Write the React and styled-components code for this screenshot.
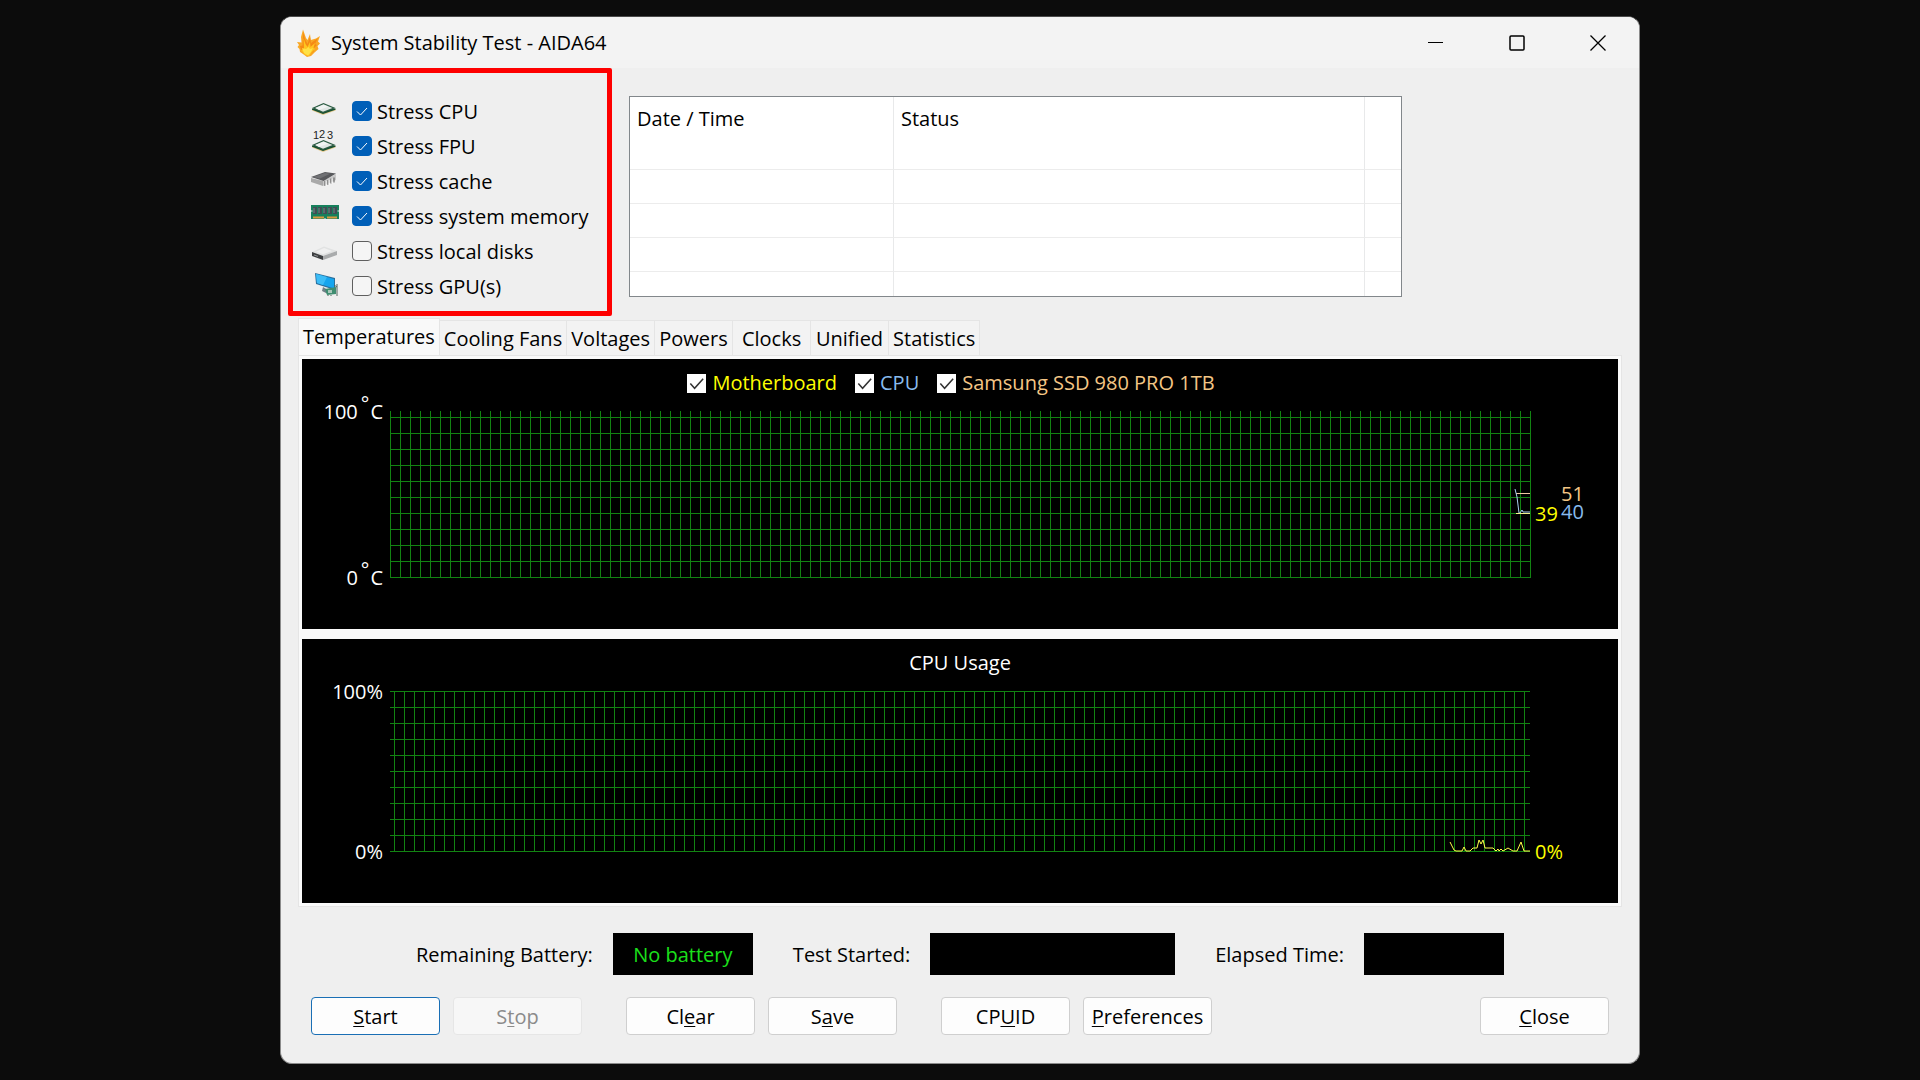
import React, { useState } from 'react';
import styled, { createGlobalStyle, css } from 'styled-components';

const GlobalStyle = createGlobalStyle`
  * {
    box-sizing: border-box;
  }

  body {
    margin: 0;
    background: #0c0c0c;
    color: #000;
    font-family: 'Open Sans', 'Noto Sans', sans-serif;
    font-size: 20px;
    line-height: 24px;
  }

  button, input {
    font: inherit;
  }
`;

const blueTick = `url("data:image/svg+xml,%3Csvg xmlns='http://www.w3.org/2000/svg' viewBox='0 0 20 20'%3E%3Cpath d='M5 10.5l3.5 3.5L15 7' fill='none' stroke='white' stroke-width='1'/%3E%3C/svg%3E")`;
const darkTick = `url("data:image/svg+xml,%3Csvg xmlns='http://www.w3.org/2000/svg' viewBox='0 0 20 20'%3E%3Cpath d='M3.5 10l4.5 5L17 5' fill='none' stroke='%23333' stroke-width='1.6'/%3E%3C/svg%3E")`;

const Desktop = styled.div`
  min-height: 100vh;
  padding: 16px 280px;
`;

const Window = styled.main`
  overflow: hidden;
  border: 1px solid #8b8b8b;
  border-top-color: #4a4a4a;
  border-radius: 12px;
  background: #efefef;
`;

const TitleBar = styled.header`
  display: flex;
  align-items: center;
  height: 51px;
  padding: 0 1px 0 16px;
  background: #f3f3f3;
`;

const Title = styled.h1`
  flex: 1;
  margin: 0 0 0 11px;
  font-size: 20px;
  font-weight: 400;
`;

const WindowButton = styled.button`
  display: flex;
  align-items: center;
  justify-content: center;
  width: 81px;
  height: 50px;
  padding: 0;
  border: 0;
  background: none;
`;

const Top = styled.section`
  display: flex;
  align-items: flex-start;
  gap: 17px;
  padding: 0 237px 0 7px;
`;

const StressList = styled.ul`
  width: 324px;
  margin: 0;
  padding: 20px 0 8px 18px;
  border: 5px solid #fe0000;
  border-radius: 2px;
  list-style: none;
`;

const StressItem = styled.li`
  display: flex;
  align-items: center;
  gap: 13px;
  height: 35px;
`;

const StressLabel = styled.label`
  display: flex;
  align-items: center;
  gap: 5px;
`;

const StressName = styled.span`
  padding-top: 2px;
`;

const Checkbox = styled.input.attrs({ type: 'checkbox' })`
  appearance: none;
  width: 20px;
  height: 20px;
  margin: 0;
  border: 1px solid #5f5f5f;
  border-radius: 4px;
  background: #f5f5f5;

  &:checked {
    border-color: #005fb8;
    background: #005fb8 ${blueTick} center / 20px;
  }
`;

const LogFrame = styled.div`
  flex: 1;
  margin-top: 28px;
  border: 1px solid #82878b;
  background: #fff;
`;

const LogTable = styled.table`
  width: 100%;
  border-collapse: separate;
  border-spacing: 0;
  table-layout: fixed;

  th {
    height: 39px;
    padding: 4px 7px 0;
    font-weight: 400;
    text-align: left;
  }

  td {
    height: 34px;
    padding: 0;
    border-bottom: 1px solid #ececec;
  }

  tr:last-child td {
    height: 24px;
    border-bottom: 0;
  }

  th:not(:last-child), td:not(:last-child) {
    border-right: 1px solid #e8e9ea;
  }
`;

const TabList = styled.div`
  display: flex;
  align-items: flex-end;
  height: 39px;
  padding-left: 17px;
`;

const Tab = styled.button`
  min-width: 78px;
  height: 35px;
  padding: 2px 4px 0;
  border: 1px solid #e5e5e5;
  border-width: 1px 1px 0 0;
  background: #f3f3f3;
  color: #000;

  ${({ $active }) => $active && css`
    height: 37px;
    padding-bottom: 2px;
    border-left-width: 1px;
    background: #f9f9f9;
  `}
`;

const Panel = styled.section`
  display: flex;
  flex-direction: column;
  gap: 10px;
  margin: 0 17px;
  padding: 3px;
  border: 1px solid #e5e5e5;
  background: #fafafa;
`;

const Chart = styled.div`
  padding: 0 88px 51px 0;
  background: #000;
  color: #fff;
`;

const ChartHeader = styled.div`
  display: flex;
  align-items: center;
  justify-content: center;
  height: 52px;
  padding: 0 0 4px 88px;
`;

const LegendLabel = styled.label`
  display: flex;
  align-items: center;
  gap: 6px;
  margin-right: 18px;
  color: ${({ $color }) => $color};
`;

const LegendBox = styled.input.attrs({ type: 'checkbox' })`
  appearance: none;
  width: 19px;
  height: 19px;
  margin: 0;
  background: #fff;

  &:checked {
    background: #fff ${darkTick} center / 19px;
  }
`;

const ChartBody = styled.div`
  display: flex;
`;

const Axis = styled.div`
  display: flex;
  flex-direction: column;
  justify-content: space-between;
  align-items: flex-end;
  width: 88px;
  margin: -11px 0 -12px;
  padding-right: 7px;
`;

const Degree = styled.span`
  margin: 0 1px 0 3px;
  line-height: 0;
  vertical-align: 8px;
`;

const Plot = styled.svg`
  flex: 1;
  min-width: 0;
  overflow: visible;
  font-size: 20px;
`;

const StatusRow = styled.div`
  display: flex;
  justify-content: center;
  gap: 40px;
  margin-top: 26px;
`;

const StatusField = styled.div`
  display: flex;
  align-items: center;
  gap: 20px;

  label {
    padding-top: 2px;
  }
`;

const Readout = styled.output`
  display: flex;
  align-items: center;
  justify-content: center;
  width: ${({ $wide }) => ($wide ? 245 : 140)}px;
  height: 42px;
  padding-top: 2px;
  background: #000;
  color: #1be01b;
`;

const Actions = styled.footer`
  display: flex;
  gap: 44px;
  padding: 22px 30px 28px;
`;

const ActionGroup = styled.div`
  display: flex;
  gap: 13px;

  &:last-child {
    margin-left: auto;
  }
`;

const ActionButton = styled.button`
  width: 129px;
  height: 38px;
  padding: 2px 0 0;
  border: 1px solid ${({ $primary }) => ($primary ? '#1a6fb5' : '#cfcfcf')};
  border-radius: 4px;
  background: #fdfdfd;
  color: #000;

  u {
    text-decoration-thickness: 1px;
    text-decoration-skip-ink: none;
    text-underline-offset: 2px;
  }

  &:disabled {
    border-color: #e6e6e6;
    background: #f7f7f7;
    color: #8b8b8b;
  }
`;

const FlameIcon = () => (
  <svg width="23" height="28" viewBox="0 0 23 28" aria-hidden="true">
    <path d="M6 0.500L9 9l1.500 2L13 5l.8 6L19 9.500l4-2.500-2 5.500 2 2-2.500 2.500 1 3-4 3.500L14 27l-4 1-4-3-3-2-.5-3L.5 18l1.500-2L0 13l4.500.5L4 8z" fill="#f9a825" />
    <path d="M6.300 3L8 10l2.500 5L13 8l1 6 7-5-3 6 2 1-3 3v3l-4 3.500-6-1L4 21l-1-4 2.500-.5z" fill="#f58a14" />
    <path d="M6.500 9l2 6 2 3 2.500-5 .5 5L18 14l-1.500 4.500L18 20l-3 3-3 4-4-1-4-5 3-1z" fill="#ffc41f" />
    <path d="M5 19l4 1 2.500-2 1.500 2 3-1-2 4-3 3.500L7 24z" fill="#ffe145" />
  </svg>
);

const Die = ({ y }) => (
  <g transform={`translate(0 ${y})`}>
    <path d="M1 6v1.600L12 12l12.500-4.400V6z" fill="#e6c98c" />
    <path d="M1 5.500v1.300L12 11l12.500-4.200V5.500z" fill="#174f31" />
    <path d="M12.500 0L24.500 5 12 10 1 5z" fill="#2c5c43" />
    <path d="M12.500 1.200L21.500 5 12 8.700 4 5z" fill="#dfe6e3" />
    <path d="M12.500 1.800L17 3.700 8 7 4.600 5z" fill="#f1f4f3" />
  </g>
);

const stressIcons = {
  cpu: <Die y={6} />,
  fpu: (
    <>
      <g fontFamily="Liberation Sans, sans-serif" fontSize="11" fill="#222">
        <text x="2" y="7">1</text>
        <text x="8" y="6">2</text>
        <text x="16" y="7">3</text>
      </g>
      <Die y={8} />
    </>
  ),
  cache: (
    <>
      <path d="M0 11v4l12 4V14z" fill="#a9a9a9" />
      <path d="M12 14v5l13-6V7z" fill="#c9c9c9" />
      <path d="M0 10L14 5l11 1.500L12.500 14z" fill="#58595c" />
      <path d="M2 10l12-4 5 .7L9 11.500z" fill="#707174" />
      <path d="M14 14v5m3-6v5m3-6.500v5m3-6v5" stroke="#555" strokeWidth="1" />
      <path d="M15 14v5m3-6v5m3-6.500v5" stroke="#fff" strokeWidth="1" />
    </>
  ),
  memory: (
    <>
      <path d="M0 3h28v14H15l-1-1-1 1H0z" fill="#17805c" />
      <path d="M2 5h4v7H2zM7 5h4v7H7zM12 5h4v7h-4zM17 5h4v7h-4zM22 5h4v7h-4z" fill="#3f4f53" />
      <path d="M3 6v5m5-5v5m5-5v5m5-5v5m5-5v5" stroke="#71898a" strokeWidth="1" />
      <path d="M2 15.500h11m3 0h10" stroke="#d99a3e" strokeWidth="2" />
      <path d="M0 9h1.500M26.500 9H28" stroke="#efefef" strokeWidth="1" />
    </>
  ),
  disk: (
    <>
      <path d="M1 15L13 9.500 26 14 12 19z" fill="#e1e2e2" />
      <path d="M5 14.800L13 11l8 3-9 3.300z" fill="#f0f0f0" />
      <path d="M12 19l14-5v4l-14 5z" fill="#a9abac" />
      <path d="M1 15l11 4v4L1 19z" fill="#3d3f41" />
      <path d="M3 18l4 1.400" stroke="#8f9294" strokeWidth="1" />
    </>
  ),
  gpu: (
    <>
      <path d="M4 1l20 5v12L5 12z" fill="#2a6f9c" />
      <path d="M5 2l18 5v9.500L6 11z" fill="#16a5ee" />
      <path d="M5 2l11 3-4 8-6-2z" fill="#3cbcf6" />
      <path d="M12 15l-1 4 6 3 3-2z" fill="#6f7f86" />
      <path d="M14 17l11-2v7l-9 1z" fill="#3f8d70" />
      <path d="M17 18h4v3h-4z" fill="#a9c7b9" />
      <path d="M26 12v12M23 13l3 2m-9 8v1m3-1v1" stroke="#53645d" strokeWidth="1" />
    </>
  ),
};

const stressTests = [
  { id: 'cpu', label: 'Stress CPU', on: true },
  { id: 'fpu', label: 'Stress FPU', on: true },
  { id: 'cache', label: 'Stress cache', on: true },
  { id: 'memory', label: 'Stress system memory', on: true },
  { id: 'disk', label: 'Stress local disks', on: false },
  { id: 'gpu', label: 'Stress GPU(s)', on: false },
];

const tabs = ['Temperatures', 'Cooling Fans', 'Voltages', 'Powers', 'Clocks', 'Unified', 'Statistics'];

const sensors = [
  { label: 'Motherboard', color: '#ffff00' },
  { label: 'CPU', color: '#88bbee' },
  { label: 'Samsung SSD 980 PRO 1TB', color: '#f4c685' },
];

const cpuUsage = '-80,151 -76,159 -74,160 -68,160 -66,156 -64,160 -60,160 -57,157 -53,157 -51,149 -49,153 -47,149 -45,157 -37,157 -34,160 -32,158 -31,160 -29,158 -27,160 -22,157 -17,160 -13,160 -9,151 -6,160 0,160';

// x is the offset of the first vertical line, y that of the first horizontal one
const Grid = ({ id, x, y }) => (
  <>
    <defs>
      <pattern id={`${id}-v`} x={x} width="10" height="16" patternUnits="userSpaceOnUse">
        <path d="M0.5 0v16" stroke="#128312" />
      </pattern>
      <pattern id={`${id}-h`} y={y} width="10" height="16" patternUnits="userSpaceOnUse">
        <path d="M0 0.5h10" stroke="#128312" />
      </pattern>
    </defs>
    <rect width="100%" height="100%" fill={`url(#${id}-h)`} />
    <rect width="100%" height="100%" fill={`url(#${id}-v)`} />
  </>
);

const Mnemonic = ({ text, at }) => (
  <>
    {text.slice(0, at)}
    <u>{text[at]}</u>
    {text.slice(at + 1)}
  </>
);

const App = () => {
  const [activeTab, setActiveTab] = useState('Temperatures');

  return (
    <>
      <GlobalStyle />
      <Desktop>
        <Window>
          <TitleBar>
            <FlameIcon />
            <Title>System Stability Test - AIDA64</Title>
            <WindowButton aria-label="Minimize">
              <svg width="16" height="16"><path d="M0 7.500h15" stroke="#000" /></svg>
            </WindowButton>
            <WindowButton aria-label="Maximize">
              <svg width="16" height="16" fill="none"><rect x="1" y="1" width="14" height="14" rx="1" stroke="#000" strokeWidth="1.500" /></svg>
            </WindowButton>
            <WindowButton aria-label="Close window">
              <svg width="16" height="16"><path d="M0.500 0.500l15 15m0-15l-15 15" stroke="#000" strokeWidth="1.300" /></svg>
            </WindowButton>
          </TitleBar>

          <Top>
            <StressList>
              {stressTests.map(({ id, label, on }) => (
                <StressItem key={id}>
                  <svg width="28" height="28" viewBox="0 0 28 28" overflow="visible" aria-hidden="true">
                    {stressIcons[id]}
                  </svg>
                  <StressLabel>
                    <Checkbox defaultChecked={on} />
                    <StressName>{label}</StressName>
                  </StressLabel>
                </StressItem>
              ))}
            </StressList>
            <LogFrame>
              <LogTable>
                <colgroup>
                  <col style={{ width: 264 }} />
                  <col />
                  <col style={{ width: 36 }} />
                </colgroup>
                <thead>
                  <tr>
                    <th>Date / Time</th>
                    <th>Status</th>
                    <th aria-label="More" />
                  </tr>
                </thead>
                <tbody>
                  {[1, 2, 3, 4, 5].map((row) => (
                    <tr key={row}>
                      <td />
                      <td />
                      <td />
                    </tr>
                  ))}
                </tbody>
              </LogTable>
            </LogFrame>
          </Top>

          <TabList role="tablist">
            {tabs.map((tab) => (
              <Tab
                key={tab}
                role="tab"
                aria-selected={tab === activeTab}
                $active={tab === activeTab}
                onClick={() => setActiveTab(tab)}
              >
                {tab}
              </Tab>
            ))}
          </TabList>

          <Panel>
            <Chart>
              <ChartHeader>
                {sensors.map(({ label, color }) => (
                  <LegendLabel key={label} $color={color}>
                    <LegendBox defaultChecked />
                    {label}
                  </LegendLabel>
                ))}
              </ChartHeader>
              <ChartBody>
                <Axis>
                  <span>100<Degree>°</Degree>C</span>
                  <span>0<Degree>°</Degree>C</span>
                </Axis>
                <Plot height="167">
                  <Grid id="temp" x={0} y={6} />
                  <svg x="100%" overflow="visible">
                    <path d="M0.500 0v167" stroke="#128312" />
                    <path d="M-14 82.500H0" stroke="#f0c8a0" />
                    <path d="M-15 78l2 8 2 16 1 0 2-3 1 2H0" fill="none" stroke="#a8cdf0" />
                    <path d="M-14 102.500H0" stroke="#f2f28a" />
                    <text x="5" y="110" fill="#ffff00">39</text>
                    <text x="31" y="90" fill="#f4c685">51</text>
                    <text x="31" y="108" fill="#88bbee">40</text>
                  </svg>
                </Plot>
              </ChartBody>
            </Chart>

            <Chart>
              <ChartHeader>CPU Usage</ChartHeader>
              <ChartBody>
                <Axis>
                  <span>100%</span>
                  <span>0%</span>
                </Axis>
                <Plot height="161">
                  <Grid id="usage" x={4} y={0} />
                  <svg x="100%" overflow="visible">
                    <polyline points={cpuUsage} fill="none" stroke="#ffff4a" />
                    <text x="5" y="168" fill="#ffff00">0%</text>
                  </svg>
                </Plot>
              </ChartBody>
            </Chart>
          </Panel>

          <StatusRow>
            <StatusField>
              <label htmlFor="battery">Remaining Battery:</label>
              <Readout id="battery">No battery</Readout>
            </StatusField>
            <StatusField>
              <label htmlFor="started">Test Started:</label>
              <Readout id="started" $wide />
            </StatusField>
            <StatusField>
              <label htmlFor="elapsed">Elapsed Time:</label>
              <Readout id="elapsed" />
            </StatusField>
          </StatusRow>

          <Actions>
            <ActionGroup>
              <ActionButton $primary><Mnemonic text="Start" at={0} /></ActionButton>
              <ActionButton disabled><Mnemonic text="Stop" at={1} /></ActionButton>
            </ActionGroup>
            <ActionGroup>
              <ActionButton><Mnemonic text="Clear" at={2} /></ActionButton>
              <ActionButton><Mnemonic text="Save" at={1} /></ActionButton>
            </ActionGroup>
            <ActionGroup>
              <ActionButton><Mnemonic text="CPUID" at={2} /></ActionButton>
              <ActionButton><Mnemonic text="Preferences" at={0} /></ActionButton>
            </ActionGroup>
            <ActionGroup>
              <ActionButton><Mnemonic text="Close" at={0} /></ActionButton>
            </ActionGroup>
          </Actions>
        </Window>
      </Desktop>
    </>
  );
};

export default App;
